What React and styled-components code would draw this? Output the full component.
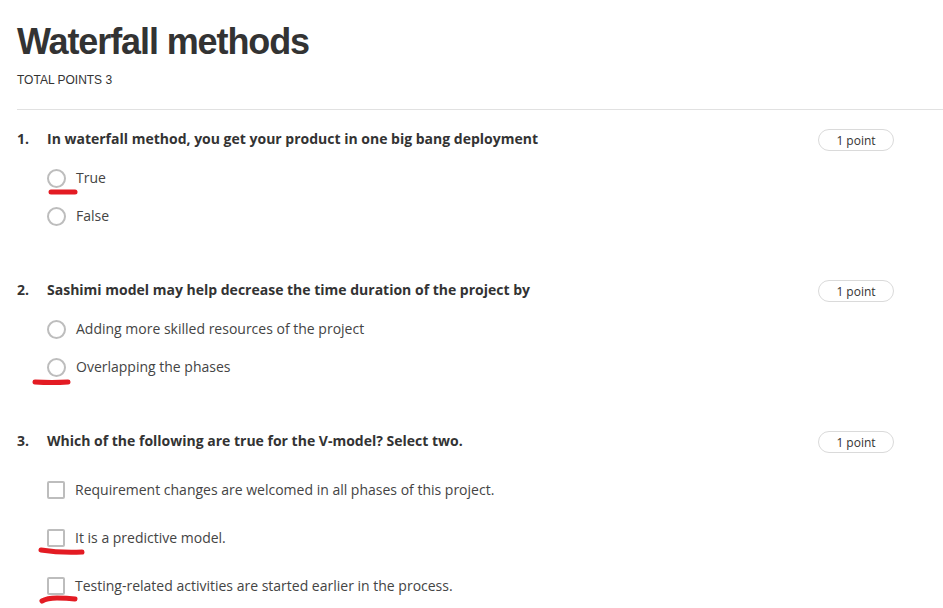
import React from 'react'
import styled, { createGlobalStyle } from 'styled-components'

const GlobalStyle = createGlobalStyle`
  body {
    margin: 0;
    background: #ffffff;
  }
`

const questions = [
  {
    num: '1.',
    text: 'In waterfall method, you get your product in one big bang deployment',
    kind: 'radio',
    options: [
      { label: 'True', mark: { left: 1, top: 11, width: 30, d: 'M3 3 L27 3' } },
      { label: 'False' },
    ],
  },
  {
    num: '2.',
    text: 'Sashimi model may help decrease the time duration of the project by',
    kind: 'radio',
    options: [
      { label: 'Adding more skilled resources of the project' },
      { label: 'Overlapping the phases', mark: { left: -15, top: 12, width: 40, d: 'M3 3 Q20 4 36 3' } },
    ],
  },
  {
    num: '3.',
    text: 'Which of the following are true for the V-model? Select two.',
    kind: 'check',
    options: [
      { label: 'Requirement changes are welcomed in all phases of this project.' },
      { label: 'It is a predictive model.', mark: { left: -9, top: 8, width: 48, d: 'M3 4 Q22 7 44 6' } },
      { label: 'Testing-related activities are started earlier in the process.', mark: { left: -8, top: 8, width: 40, d: 'M3 7 Q8 4 18 4 Q28 4 36 5' } },
    ],
  },
]

const Page = styled.div`
  padding: 20px 0 0 17px;
  font-family: "Open Sans", "Liberation Sans", sans-serif;
  color: #333;
`

const Header = styled.header`
  display: flex;
  flex-direction: column;
  border-bottom: 1px solid #e1e1e1;
  padding-bottom: 21px;
  margin-bottom: 19px;
`

const Title = styled.h1`
  margin: 0;
  font-family: "Liberation Sans", Arial, sans-serif;
  font-size: 36px;
  line-height: 44px;
  font-weight: 700;
  letter-spacing: -1.1px;
  color: #333;
`

const TotalPoints = styled.div`
  margin-top: 8px;
  font-family: "Liberation Sans", Arial, sans-serif;
  font-size: 12px;
  line-height: 16px;
  color: #333;
`

const QuestionList = styled.div`
  display: flex;
  flex-direction: column;
  gap: 45px;
`

const Question = styled.section`
  display: flex;
  flex-direction: column;
`

const QuestionRow = styled.div`
  display: flex;
  align-items: center;
  height: 22px;
  padding-right: 49px;
`

const Number = styled.span`
  width: 30px;
  font-size: 14px;
  font-weight: 700;
  color: #333;
  margin-top: -3px;
`

const QuestionText = styled.span`
  flex: 1;
  font-size: 14px;
  font-weight: 700;
  color: #333;
  margin-top: -3px;
`

const Pill = styled.span`
  box-sizing: border-box;
  width: 76px;
  height: 22px;
  border: 1px solid #dadada;
  border-radius: 11px;
  display: flex;
  align-items: center;
  justify-content: center;
  font-size: 12px;
  color: #333;
`

const Options = styled.div`
  display: flex;
  flex-direction: column;
  padding: ${(p) => (p.$check ? '13px' : '8px')} 0 0 30px;
`

const Option = styled.label`
  position: relative;
  display: flex;
  align-items: center;
  gap: 10px;
  height: ${(p) => (p.$check ? '48px' : '38px')};
  font-size: 14px;
  color: #444;
`

const OptionText = styled.span`
  margin-top: -2px;
`

const Radio = styled.span`
  box-sizing: border-box;
  width: 19px;
  height: 19px;
  border-radius: 50%;
  border: 2px solid #bdbdbd;
  flex-shrink: 0;
`

const Check = styled.span`
  box-sizing: border-box;
  width: 18px;
  height: 18px;
  border-radius: 2px;
  border: 2px solid #bdbdbd;
  flex-shrink: 0;
`

const MarkSvg = styled.svg`
  position: absolute;
  left: ${(p) => p.$left}px;
  top: calc(50% + ${(p) => p.$top}px);
  overflow: visible;
`

const Mark = ({ left, top, width, d }) => (
  <MarkSvg $left={left} $top={top} width={width} height="10">
    <path d={d} fill="none" stroke="#e31b23" strokeWidth="5" strokeLinecap="round" />
  </MarkSvg>
)

export default function App() {
  return (
    <>
      <GlobalStyle />
      <Page>
        <Header>
          <Title>Waterfall methods</Title>
          <TotalPoints>TOTAL POINTS 3</TotalPoints>
        </Header>
        <QuestionList>
          {questions.map((q) => (
            <Question key={q.num}>
              <QuestionRow>
                <Number>{q.num}</Number>
                <QuestionText>{q.text}</QuestionText>
                <Pill>1 point</Pill>
              </QuestionRow>
              <Options $check={q.kind === 'check'}>
                {q.options.map((o) => (
                  <Option key={o.label} $check={q.kind === 'check'}>
                    {q.kind === 'check' ? <Check /> : <Radio />}
                    <OptionText>{o.label}</OptionText>
                    {o.mark && <Mark {...o.mark} />}
                  </Option>
                ))}
              </Options>
            </Question>
          ))}
        </QuestionList>
      </Page>
    </>
  )
}
